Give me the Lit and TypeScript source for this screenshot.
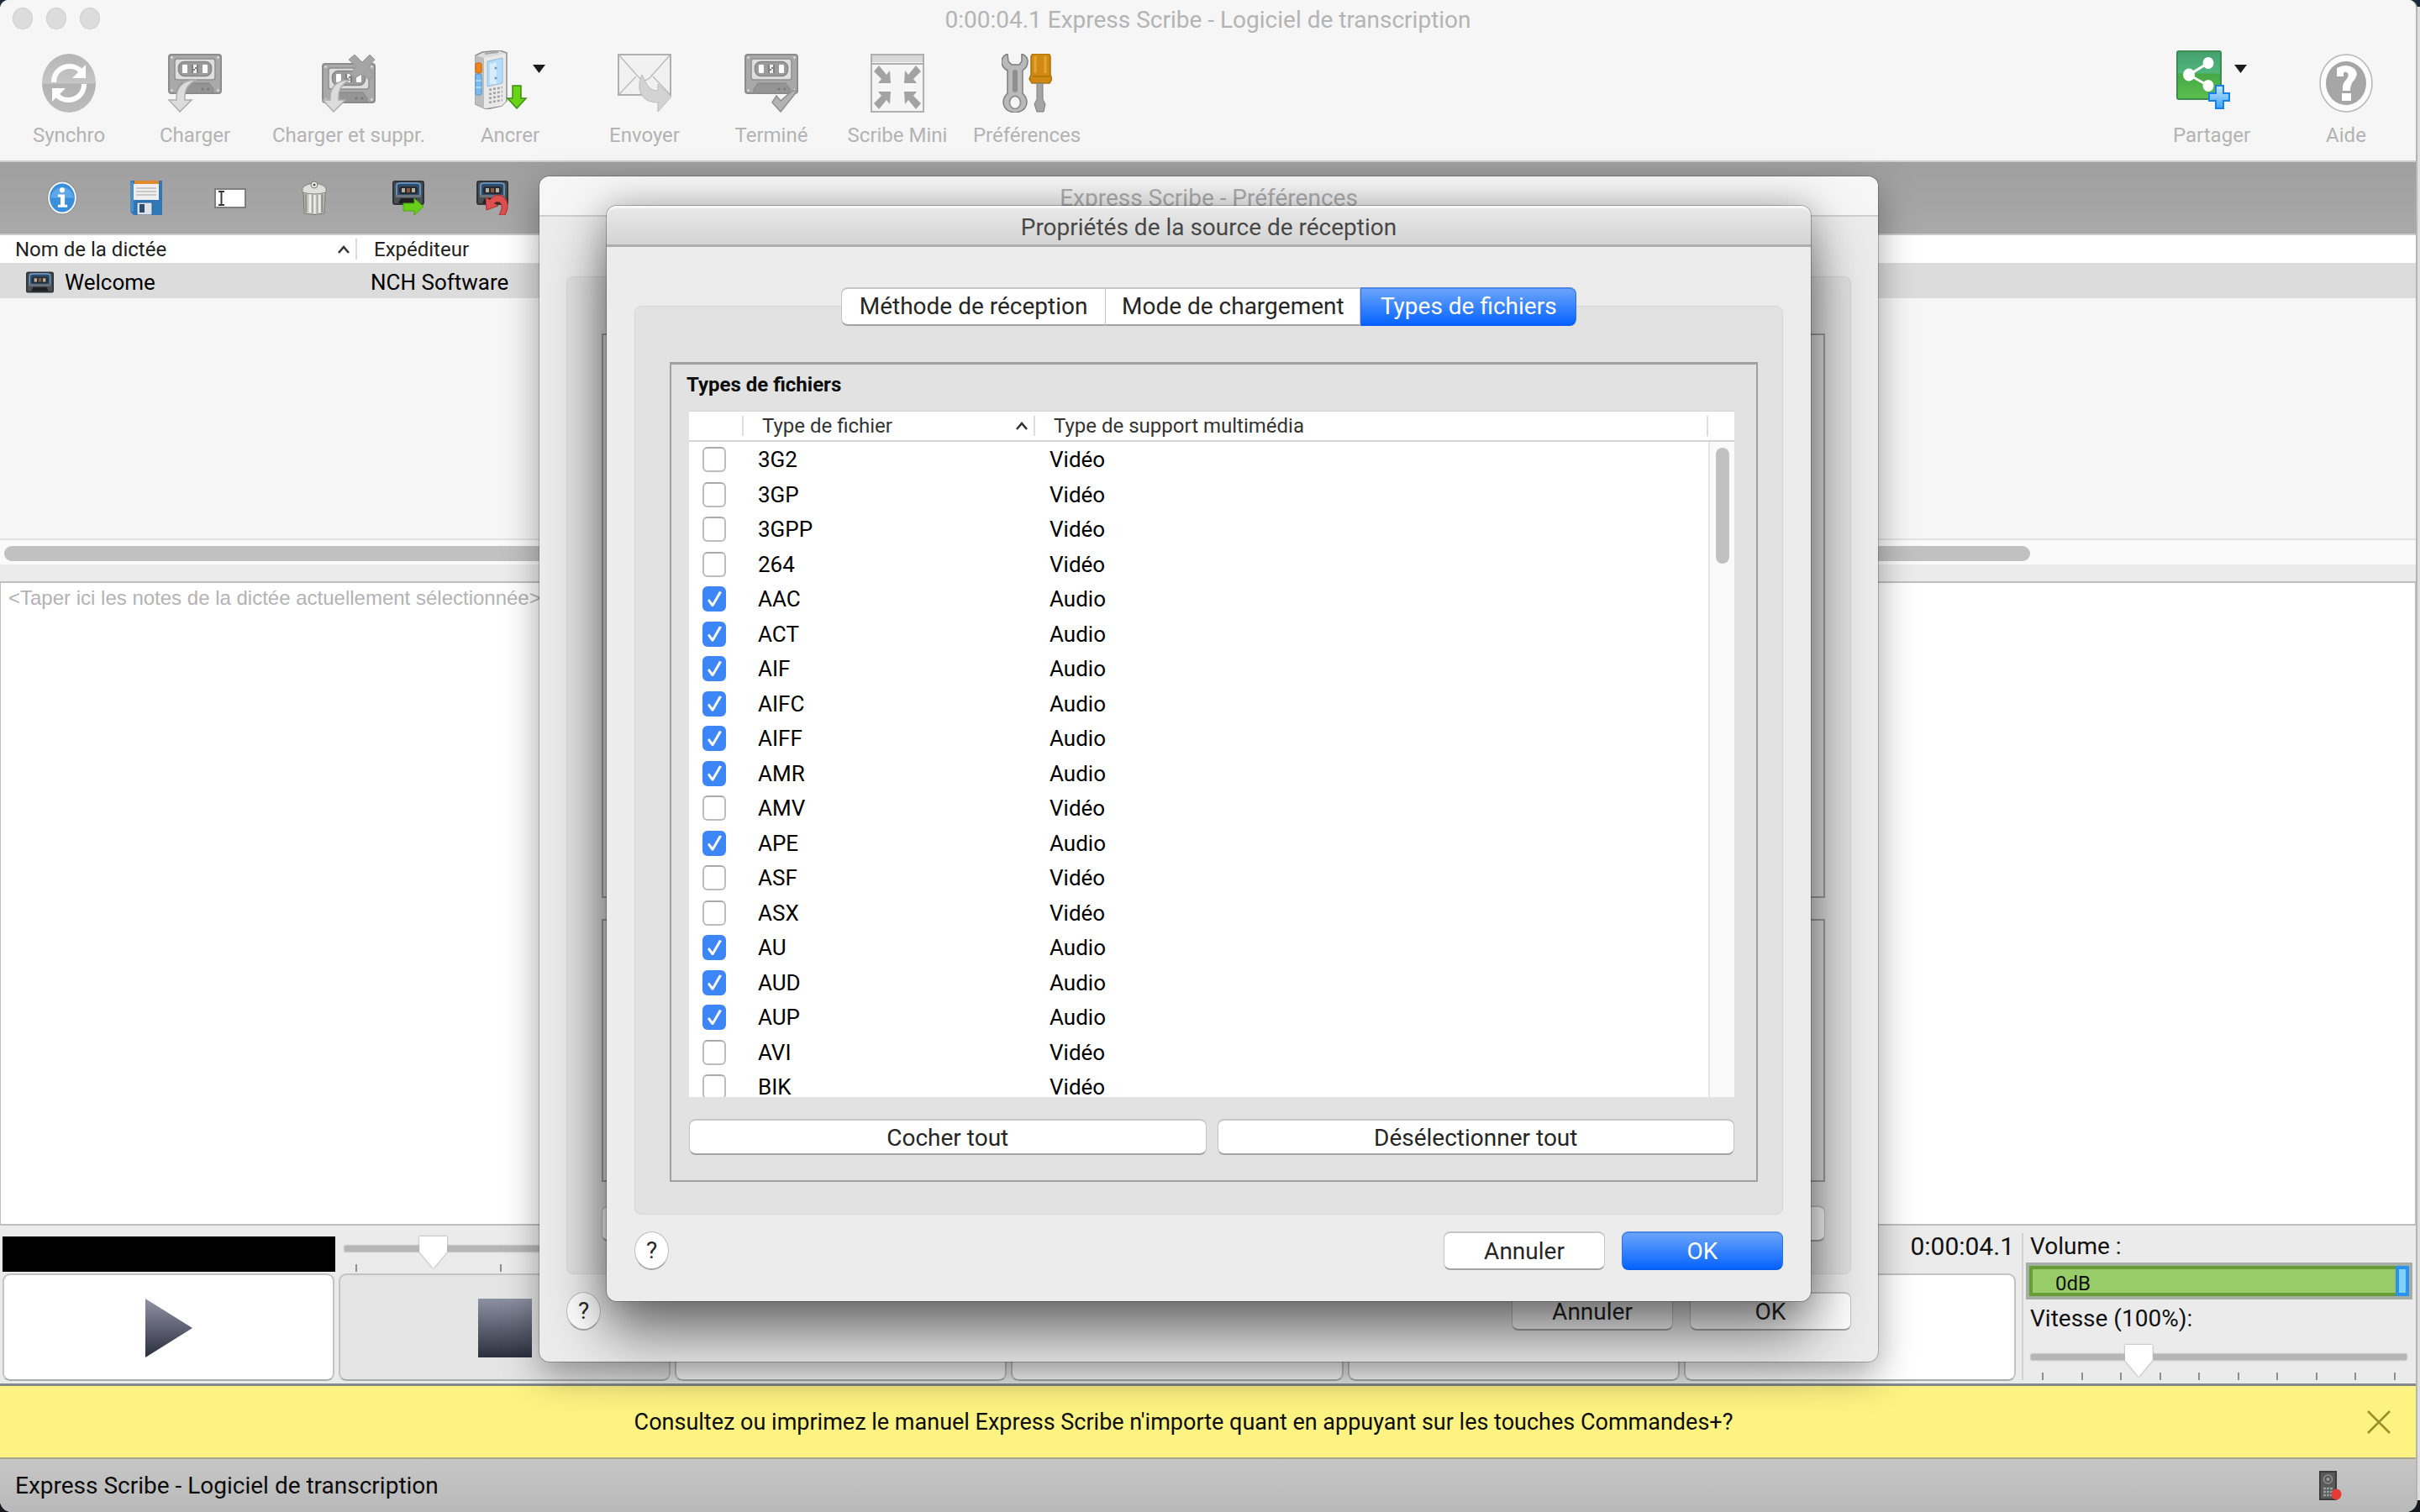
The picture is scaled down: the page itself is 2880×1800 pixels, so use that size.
import { LitElement, html, css, svg, nothing } from "lit";
import { customElement } from "lit/decorators.js";
import { classMap } from "lit/directives/class-map.js";

type FileType = [name: string, media: string, checked: boolean];

const FILE_TYPES: FileType[] = [
  ["3G2", "Vidéo", false],
  ["3GP", "Vidéo", false],
  ["3GPP", "Vidéo", false],
  ["264", "Vidéo", false],
  ["AAC", "Audio", true],
  ["ACT", "Audio", true],
  ["AIF", "Audio", true],
  ["AIFC", "Audio", true],
  ["AIFF", "Audio", true],
  ["AMR", "Audio", true],
  ["AMV", "Vidéo", false],
  ["APE", "Audio", true],
  ["ASF", "Vidéo", false],
  ["ASX", "Vidéo", false],
  ["AU", "Audio", true],
  ["AUD", "Audio", true],
  ["AUP", "Audio", true],
  ["AVI", "Vidéo", false],
  ["BIK", "Vidéo", false],
];

/* Cassette in greys, 64 x 48, used by the disabled toolbar buttons */
const greyCassette = svg`
  <rect x="1" y="1" width="62" height="46" rx="3" fill="#a9a9a9" stroke="#8c8c8c" stroke-width="2"/>
  <rect x="8" y="6" width="48" height="25" rx="3" fill="#dedede" stroke="#8f8f8f" stroke-width="1.5"/>
  <rect x="12.500" y="9.500" width="39" height="17" rx="7" fill="#9b9b9b" stroke="#868686" stroke-width="1.500"/>
  <rect x="17" y="13" width="6" height="10" rx="1" fill="#fff"/>
  <rect x="28" y="13" width="8" height="10" fill="#808080"/>
  <path d="M30 13h4v3h-2v2h2v5h-4v-3h2v-2h-2z" fill="#efefef"/>
  <rect x="41" y="13" width="6" height="10" rx="1" fill="#fff"/>
  <path d="M11 47v-5l5-7h33l5 7v5z" fill="#959595" stroke="#858585"/>
  <circle cx="41" cy="42" r="1.500" fill="#777"/><circle cx="48" cy="42" r="1.500" fill="#777"/>
  <circle cx="4.500" cy="4.500" r="1.200" fill="#e8e8e8"/><circle cx="59.500" cy="4.500" r="1.200" fill="#e8e8e8"/>
  <circle cx="4.500" cy="43.500" r="1.200" fill="#e8e8e8"/><circle cx="59.500" cy="43.500" r="1.200" fill="#e8e8e8"/>`;

const curvedArrow = svg`
  <path d="M34 31C24 31 10 35 10 52V55H1L14 69 28 55H20V51C20 42 25 35 34 31Z" fill="#dcdcdc" stroke="#adadad" stroke-width="1.500"/>`;

const darkCassette = svg`
  <rect x="1" y="1" width="36" height="27" rx="2" fill="#4a4f54" stroke="#303336" stroke-width="2"/>
  <path d="M5 17V6Q5 3 9 3H29Q33 3 33 6V17" fill="#2f4b67" stroke="#6fa5d8" stroke-width="1.500"/>
  <rect x="8" y="7" width="22" height="9" rx="3" fill="#272c31"/>
  <rect x="11" y="9" width="4" height="5" fill="#b3aca4"/><rect x="17" y="9" width="4" height="5" fill="#8a5a3a"/><rect x="23" y="9" width="4" height="5" fill="#b3aca4"/>
  <rect x="4" y="17" width="30" height="3" fill="#6a7580"/>
  <path d="M7 27l3-6h18l3 6z" fill="#1f2123"/>`;

const ICONS = {
  sync: svg`<svg viewBox="0 0 64 70" class="big">
    <defs><linearGradient id="sy" x1="0" y1="0" x2="0" y2="1"><stop offset="0" stop-color="#b5b5b5"/><stop offset=".5" stop-color="#c6c6c6"/><stop offset=".52" stop-color="#b2b2b2"/><stop offset="1" stop-color="#bdbdbd"/></linearGradient></defs>
    <ellipse cx="32" cy="35" rx="32" ry="35" fill="url(#sy)"/>
    <path d="M14 34C14 21 24 15 33 15 39 15 44 18 46 21" fill="none" stroke="#fff" stroke-width="6"/>
    <path d="M52 13V29H36Z" fill="#fff"/>
    <path d="M50 36C50 49 40 55 31 55 25 55 20 52 18 49" fill="none" stroke="#fff" stroke-width="6"/>
    <path d="M12 57V41H28Z" fill="#fff"/></svg>`,
  load: svg`<svg viewBox="0 0 64 70" class="big">${greyCassette}${curvedArrow}</svg>`,
  loadDelete: svg`<svg viewBox="0 0 64 70" class="big">
    <g transform="translate(0 11)">${greyCassette}</g>
    <path d="M32 7L39 1 48 10 57 1 63 7 55 16 63 26 56 31 48 24 39 29 33 24 41 15Z" fill="#a5a5a5" stroke="#979797"/>
    ${curvedArrow}</svg>`,
  dock: svg`<svg viewBox="0 0 64 70" class="big">
    <path d="M1 6L9 2 30 0 38 3V60L32 66 14 70 1 64Z" fill="#dcdcdc" stroke="#8e8e8e" stroke-width="1.500"/>
    <path d="M1 6L11 9V69L1 64Z" fill="#bdbdbd"/><path d="M11 9L37 4V61L32 66 11 69Z" fill="#e9e9e9"/>
    <path d="M12 4L28 2" stroke="#a6a6a6" stroke-width="2"/>
    <rect x="1" y="15" width="7" height="12" rx="2" fill="#f08418" stroke="#c7660a"/>
    <rect x="1" y="28" width="7" height="25" rx="2" fill="#79bcf4" stroke="#5294cf"/><path d="M1 36h7M1 44h7" stroke="#d9eefc"/>
    <path d="M15 13L33 9V39L15 43Z" fill="#b5dcfa" stroke="#9db8cc"/><path d="M18 16L26 14V40L18 40Z" fill="#d7ecfc"/>
    <circle cx="25" cy="21" r="1.500" fill="#7f95ad"/><circle cx="25" cy="33" r="1.500" fill="#7f95ad"/>
    <path d="M17 47l16-3M17 52l16-3M17 57l16-3M17 62l16-3" stroke="#a2a2a2" stroke-width="2.500" stroke-dasharray="3 2"/>
    <path d="M45 42H55V57H61L50 69 39 57H45Z" fill="#67d416" stroke="#3b8f10" stroke-width="1.500"/></svg>`,
  send: svg`<svg viewBox="0 0 64 70" class="big">
    <rect x="1" y="1" width="62" height="48" fill="#f1f1f1" stroke="#b0b0b0" stroke-width="2"/>
    <path d="M2 2L26 29Q32 34 38 29L62 2M2 48L22 27M62 48L42 27" fill="none" stroke="#bdbdbd" stroke-width="1.500"/>
    <path d="M29 25C22 40 26 58 48 58V69L64 51 48 36V44C38 44 35 38 29 25Z" fill="#d3d3d3" stroke="#bababa"/></svg>`,
  done: svg`<svg viewBox="0 0 64 70" class="big">${greyCassette}
    <path d="M33 58L38 50 43 56 57 44H63L43 69Z" fill="#b3b3b3" stroke="#8e8e8e" stroke-width="1.500"/></svg>`,
  mini: svg`<svg viewBox="0 0 64 70" class="big">
    <rect x="1" y="1" width="62" height="68" fill="#f5f5f5" stroke="#b0b0b0" stroke-width="2"/>
    <rect x="2" y="2" width="60" height="8" fill="#d8d8d8"/><path d="M1 12H63" stroke="#b0b0b0" stroke-width="2"/>
    ${[[1, 1], [-1, 1], [1, -1], [-1, -1]].map(
      ([x, y]) => svg`<path transform="translate(32 40) scale(${x} ${y})" d="M-8 -5L-23 -5 -19 -10 -28 -19 -22 -26 -13 -15 -9 -20Z" fill="#a3a3a3"/>`,
    )}</svg>`,
  prefs: svg`<svg viewBox="0 0 60 70" class="big narrow">
    <path d="M7 0Q0 3 0 9 0 16 7 20V47Q2 52 2 58 3 69 16 70 29 69 30 58 30 52 25 47V20Q31 16 31 9 31 3 24 0V9L21 13H12L8 9Z" fill="#b9b9b9" stroke="#7d7d7d" stroke-width="1.500"/>
    <rect x="13" y="19" width="6" height="27" rx="3" fill="#8f8f8f"/>
    <ellipse cx="16" cy="58" rx="6.500" ry="7.500" fill="#f6f6f6" stroke="#888" stroke-width="1.500"/>
    <path d="M35 3Q36 0 39 0H54Q58 0 58 4V25L60 30 57 35H36L33 30 35 25Z" fill="#d08a14" stroke="#ab7309" stroke-width="1.500"/>
    <path d="M40 3V23M52 3V23" stroke="#e2a532" stroke-width="3"/><path d="M37 27H57" stroke="#ab7309" stroke-width="1.500"/>
    <path d="M42 35H49V54L52 60 50 69H42L39 60 42 54Z" fill="#a4a4a4" stroke="#7c7c7c"/></svg>`,
  share: svg`<svg viewBox="0 0 64 70" class="big">
    <defs><linearGradient id="sh" x1="0" y1="0" x2="0" y2="1"><stop offset="0" stop-color="#43a06d"/><stop offset=".45" stop-color="#52b57c"/><stop offset=".48" stop-color="#46a847"/><stop offset="1" stop-color="#5cbf4b"/></linearGradient>
    <linearGradient id="pl" x1="0" y1="0" x2="0" y2="1"><stop offset="0" stop-color="#c6e7ff"/><stop offset="1" stop-color="#3aa4f8"/></linearGradient></defs>
    <rect x="1" y="1" width="52" height="57" rx="2" fill="url(#sh)" stroke="#3b8a50" stroke-width="2"/>
    <path d="M38 15L15 29 38 42" fill="none" stroke="#fff" stroke-width="3"/>
    <ellipse cx="38" cy="15" rx="6.500" ry="7" fill="#fff"/><ellipse cx="15" cy="29" rx="7" ry="7.500" fill="#fff"/><ellipse cx="38" cy="42" rx="6.500" ry="7" fill="#fff"/>
    <path d="M47 42H56V51H63V60H56V69H47V60H39V51H47Z" fill="url(#pl)" stroke="#167ff0" stroke-width="2"/></svg>`,
  help: svg`<svg viewBox="0 0 64 70" class="big">
    <ellipse cx="32" cy="35" rx="31" ry="34" fill="#fcfcfc" stroke="#b5b5b5" stroke-width="1.500"/>
    <ellipse cx="32" cy="35" rx="24" ry="26" fill="#a6a6a6"/>
    <path d="M21 27V17Q32 11 41 17 48 23 42 31 37 36 37 44H28Q27 36 32 31 36 27 34 23 31 20 29 23V27Z" fill="#fff"/>
    <rect x="27" y="47" width="11" height="9" fill="#fff"/></svg>`,
  info: svg`<svg viewBox="0 0 36 40" class="small">
    <ellipse cx="18" cy="20" rx="17" ry="19" fill="#f2f6fa" stroke="#8a8a8a"/>
    <ellipse cx="18" cy="20" rx="14.500" ry="16.500" fill="#3a8fdc"/><path d="M4 20A14.500 16.500 0 0 1 32 20Z" fill="#5fa8e8"/>
    <ellipse cx="18" cy="11" rx="3" ry="3" fill="#fff"/><path d="M13 16H21V28H24V31H13V28H16V19H13Z" fill="#fff"/></svg>`,
  save: svg`<svg viewBox="0 0 38 41" class="small">
    <path d="M0 2Q0 0 2 0H38V41H4L0 37Z" fill="#2f77b5"/><path d="M0 2H4V37H0Z" fill="#4a8fc8"/>
    <rect x="5" y="0" width="29" height="4" fill="#e08a2b"/><rect x="4" y="4" width="30" height="19" fill="#efefef"/>
    <path d="M7 9H31M7 13H31M7 17H31" stroke="#c9c9c9" stroke-width="2"/>
    <path d="M8 26H26V41H8Z" fill="#dfe3e6" stroke="#24629b"/><rect x="11" y="28" width="6" height="10" fill="#2f4f72"/></svg>`,
  rename: svg`<svg viewBox="0 0 38 24" class="small short">
    <rect x="1" y="1" width="36" height="22" fill="#fff" stroke="#7f7f7f" stroke-width="2"/>
    <path d="M5 4H12M5 20H12M8.500 4V20" stroke="#3a3a3a" stroke-width="2" fill="none"/></svg>`,
  trash: svg`<svg viewBox="0 0 30 41" class="small slim">
    <path d="M2 13H28L27 39Q15 42 3 39Z" fill="#cfcfca" stroke="#76766f"/>
    <path d="M5 16V38M24.500 16V38" stroke="#9a9a94" stroke-width="3"/>
    <path d="M13 17V39M18.500 17V39" stroke="#a3a39d" stroke-width="1.500"/>
    <path d="M10 16V38M15.500 17V39M21.500 17V38" stroke="#efefeb" stroke-width="2"/>
    <path d="M1 14V9Q4 4 15 3 26 4 29 9V14Q15 18 1 14Z" fill="#dededa" stroke="#85857e"/>
    <ellipse cx="15" cy="5" rx="4" ry="4" fill="#ecece9" stroke="#77776f"/><circle cx="15" cy="5" r="1.500" fill="#55554f"/></svg>`,
  forward: svg`<svg viewBox="0 0 38 41" class="small">${darkCassette}
    <path d="M13 27H26V21L37 31 26 41V36H13Z" fill="#67cf17" stroke="#4aa512"/></svg>`,
  undo: svg`<svg viewBox="0 0 38 41" class="small">${darkCassette}
    <path d="M12 35L11 20 16 23Q24 13 33 20 41 28 34 41H27Q33 30 28 26 24 24 21 27L26 30Z" fill="#de4f4f" stroke="#a83030"/></svg>`,
  tape: svg`<svg viewBox="0 0 38 29" class="tape">${darkCassette}</svg>`,
  device: svg`<svg viewBox="0 0 27 35" class="device">
    <rect x="1" y="1" width="19" height="33" fill="#5a5a5a" stroke="#3c3c3c" stroke-width="2"/>
    <ellipse cx="10.500" cy="10" rx="5" ry="5" fill="none" stroke="#8f8f8f" stroke-width="1.500"/><circle cx="10.500" cy="10" r="2" fill="#9d9d9d"/>
    <path d="M5 21H16M5 25H16M5 29H16" stroke="#8fa39d" stroke-width="2.500" stroke-dasharray="3 1"/>
    <ellipse cx="20.500" cy="28" rx="6" ry="6.500" fill="#e53935"/></svg>`,
  play: svg`<svg viewBox="0 0 56 70" class="play">
    <defs><linearGradient id="g1" x1="0" y1="0" x2="0" y2="1"><stop offset="0" stop-color="#9294a6"/><stop offset="1" stop-color="#2a2d3c"/></linearGradient></defs>
    <path d="M0 0L56 35 0 70Z" fill="url(#g1)"/></svg>`,
  stop: svg`<svg viewBox="0 0 64 70" class="big">
    <defs><linearGradient id="g2" x1="0" y1="0" x2="0" y2="1"><stop offset="0" stop-color="#8d90a1"/><stop offset="1" stop-color="#2c303e"/></linearGradient></defs>
    <rect width="64" height="70" fill="url(#g2)"/></svg>`,
  close: svg`<svg viewBox="0 0 28 28" class="close"><path d="M1 1L27 27M27 1L1 27" stroke="#9a8f2b" stroke-width="2.500" fill="none"/></svg>`,
  caret: svg`<svg viewBox="0 0 14 10" class="caret"><path d="M1 9L7 2 13 9" stroke="#333" stroke-width="2.500" fill="none"/></svg>`,
  drop: svg`<svg viewBox="0 0 15 10" class="drop"><path d="M0 0H15L7.500 10Z" fill="#1c1c1c"/></svg>`,
};

const base = css`
  :host {
    font-family: Roboto, "Liberation Sans", sans-serif;
    font-size: 28px;
    line-height: 32px;
  }
  * {
    box-sizing: border-box;
  }
  svg {
    display: block;
    flex: none;
  }
  button {
    font: inherit;
    color: inherit;
    margin: 0;
    padding: 0;
  }
  h1,
  h2,
  p {
    margin: 0;
    font: inherit;
  }
  table {
    border-collapse: separate;
    border-spacing: 0;
    table-layout: fixed;
    width: 100%;
  }
  th,
  td {
    padding: 0;
    text-align: left;
    font-weight: 400;
  }
  .caret {
    width: 14px;
    height: 10px;
  }
  .push {
    padding-top: 2px;
    border: 1px solid #c4c4c4;
    border-top: 2px solid #c6c6c6;
    border-bottom: 2px solid #a3a3a3;
    border-radius: 8px;
    background: #fff;
    color: #262626;
  }
  .sized {
    width: 192px;
    height: 46px;
  }
  .primary {
    border-color: #4a86e8 #2a6fe8 #0a5df0;
    background: linear-gradient(#6aa4fb, #0764ff);
    color: #fff;
  }
  .query {
    width: 41px;
    height: 46px;
    border: 1px solid #bdbdbd;
    border-bottom: 2px solid #a6a6a6;
    border-radius: 50%;
    background: #fff;
    color: #262626;
  }
`;

@customElement("file-types-dialog")
class FileTypesDialog extends LitElement {
  static styles = [
    base,
    css`
      :host {
        display: block;
        width: 1433px;
        border-radius: 12px;
        background: #ececec;
        box-shadow: 0 0 0 1px rgba(0, 0, 0, 0.25), 0 40px 70px rgba(0, 0, 0, 0.5), 0 0 44px rgba(0, 0, 0, 0.25);
      }
      .title {
        display: flex;
        align-items: center;
        justify-content: center;
        height: 49px;
        padding-top: 2px;
        border-top: 3px solid #f7f7f7;
        border-bottom: 3px solid #adadad;
        border-radius: 12px 12px 0 0;
        background: linear-gradient(#e9e9e9, #d3d3d3);
        color: #484848;
      }
      .body {
        padding: 48px 33px 37px;
      }
      .tabs {
        position: relative;
        display: flex;
        width: 875px;
        height: 46px;
        margin: 0 auto -24px;
      }
      .tab {
        flex: 315 0 0;
        border: solid #c6c6c6;
        border-width: 2px 1px;
        border-bottom-color: #a3a3a3;
        background: #fff;
        color: #262626;
      }
      .tab:first-child {
        border-radius: 8px 0 0 8px;
      }
      .tab.middle {
        flex-grow: 304;
        border-left: 0;
      }
      .tab.on {
        flex-grow: 256;
        border-color: #4a86e8 #2a6fe8 #0a5df0;
        border-radius: 0 8px 8px 0;
        background: linear-gradient(#6aa4fb, #0764ff);
        color: #fff;
      }
      .panel {
        padding: 66px 29px 38px 41px;
        border: 1px solid #d6d6d6;
        border-radius: 8px;
        background: #e2e2e2;
      }
      .box {
        padding: 10px 26px 30px 18px;
        border: 2px solid #a0a0a0;
        border-top-width: 3px;
      }
      .heading {
        margin-bottom: 17px;
        font-size: 24px;
        font-weight: 700;
        line-height: 28px;
        color: #0c0c0c;
      }
      .content {
        padding-left: 3px;
      }
      .list {
        display: grid;
        grid-template-columns: 1fr 31px;
        height: 817px;
        overflow: hidden;
        border-top: 1px solid #d2d2d2;
        background: #fff;
      }
      .tick {
        width: 65px;
      }
      .kind {
        width: 347px;
      }
      th {
        height: 36px;
        border-bottom: 2px solid #d4d4d4;
        font-size: 24px;
        line-height: 28px;
        color: #333;
      }
      .label {
        display: flex;
        align-items: center;
        justify-content: space-between;
        height: 24px;
        padding: 0 7px 0 22px;
        border-right: 2px solid #dedede;
      }
      td {
        height: 42px;
        padding-left: 17px;
        font-size: 26px;
        line-height: 24px;
        color: #000;
      }
      tr:nth-child(even) td {
        height: 41px;
      }
      td:first-child {
        padding-left: 16px;
      }
      .check {
        position: relative;
        display: block;
        width: 28px;
        height: 30px;
        margin: 0;
        appearance: none;
        border: 2px solid #bcbcbc;
        border-top-color: #aaa;
        border-radius: 6px;
        background: #fff;
      }
      .check:checked {
        border-color: #3d86f8;
        background: #3d86f8;
      }
      .check:checked::after {
        content: "";
        position: absolute;
        inset: -2px;
        background: #fff;
        clip-path: polygon(6px 17px, 8px 15px, 12px 20px, 20px 6px, 23px 7px, 13px 24px, 11px 24px);
      }
      .side {
        display: flex;
        flex-direction: column;
      }
      .cap {
        height: 36px;
        border-bottom: 2px solid #d4d4d4;
      }
      .track {
        flex: 1;
        padding: 7px;
        border-left: 2px solid #e6e6e6;
        background: #fafafa;
      }
      .thumb {
        width: 16px;
        height: 138px;
        border-radius: 8px;
        background: #c1c1c1;
      }
      .pair {
        display: grid;
        grid-template-columns: 1fr 1fr;
        gap: 13px;
        margin-top: 26px;
      }
      .pair .push {
        height: 43px;
      }
      .footer {
        display: flex;
        gap: 20px;
        margin-top: 20px;
      }
      .query {
        margin-right: auto;
      }
    `,
  ];

  render() {
    return html`
      <h1 class="title">Propriétés de la source de réception</h1>
      <div class="body">
        <div class="tabs" role="tablist">
          <button class="tab" role="tab">Méthode de réception</button>
          <button class="tab middle" role="tab">Mode de chargement</button>
          <button class="tab on" role="tab" aria-selected="true">Types de fichiers</button>
        </div>
        <div class="panel">
          <section class="box">
            <h2 class="heading">Types de fichiers</h2>
            <div class="content">
              <div class="list">
                <table>
                  <thead>
                    <tr>
                      <th class="tick"><div class="label"></div></th>
                      <th class="kind"><div class="label">Type de fichier ${ICONS.caret}</div></th>
                      <th><div class="label">Type de support multimédia</div></th>
                    </tr>
                  </thead>
                  <tbody>
                    ${FILE_TYPES.map(
                      ([name, media, checked]) => html`<tr>
                        <td><input class="check" type="checkbox" id="t-${name}" .checked=${checked} /></td>
                        <td><label for="t-${name}">${name}</label></td>
                        <td>${media}</td>
                      </tr>`,
                    )}
                  </tbody>
                </table>
                <div class="side">
                  <div class="cap"></div>
                  <div class="track"><div class="thumb"></div></div>
                </div>
              </div>
              <div class="pair">
                <button class="push">Cocher tout</button>
                <button class="push">Désélectionner tout</button>
              </div>
            </div>
          </section>
        </div>
        <div class="footer">
          <button class="query">?</button>
          <button class="push sized">Annuler</button>
          <button class="push sized primary">OK</button>
        </div>
      </div>
    `;
  }
}

@customElement("preferences-dialog")
class PreferencesDialog extends LitElement {
  static styles = [
    base,
    css`
      :host {
        display: flex;
        flex-direction: column;
        width: 1593px;
        height: 1411px;
        border-radius: 12px;
        background: #ececec;
        box-shadow: 0 0 0 1px rgba(0, 0, 0, 0.22), 0 16px 44px rgba(0, 0, 0, 0.36);
      }
      .title {
        height: 48px;
        padding-top: 10px;
        border-bottom: 2px solid #cfcfcf;
        border-radius: 12px 12px 0 0;
        background: #f6f6f6;
        color: #b0b0b0;
        text-align: center;
      }
      .body {
        flex: 1;
        display: flex;
        flex-direction: column;
        padding: 71px 32px 37px;
      }
      .panel {
        flex: 1;
        display: flex;
        flex-direction: column;
        gap: 25px;
        padding: 67px 30px 38px 41px;
        border: 1px solid #d6d6d6;
        border-radius: 8px;
        background: #e2e2e2;
      }
      .box {
        flex: 676 0 0;
        border: 2px solid #a0a0a0;
      }
      .box.lower {
        flex-grow: 312;
      }
      .panel .push {
        height: 43px;
        margin-top: 3px;
      }
      .footer {
        display: flex;
        gap: 20px;
        margin-top: 21px;
      }
      .query {
        margin-right: auto;
      }
    `,
  ];

  render() {
    return html`
      <h1 class="title">Express Scribe - Préférences</h1>
      <div class="body">
        <div class="panel">
          <div class="box"></div>
          <div class="box lower"></div>
          <button class="push"></button>
        </div>
        <div class="footer">
          <button class="query">?</button>
          <button class="push sized">Annuler</button>
          <button class="push sized">OK</button>
        </div>
      </div>
    `;
  }
}

@customElement("app-root")
class AppRoot extends LitElement {
  static styles = [
    base,
    css`
      :host {
        position: relative;
        display: flex;
        min-height: 100vh;
        overflow: hidden;
        background: linear-gradient(#1b2a3a 0 8px, #dedede 8px calc(100% - 14px), #15181c 0);
      }
      .window {
        flex: 1;
        display: flex;
        flex-direction: column;
        min-width: 0;
        margin-right: 3px;
        border-right: 2px solid #b5b5b5;
        border-radius: 10px 10px 14px 14px;
        background: #ebebeb;
        overflow: hidden;
      }
      .titlebar {
        position: relative;
        height: 48px;
        padding-top: 8px;
        background: #f6f6f6;
        color: #b4b4b4;
        text-align: center;
      }
      .lights {
        position: absolute;
        left: 15px;
        top: 9px;
        display: flex;
        gap: 16px;
      }
      .light {
        width: 24px;
        height: 26px;
        border: 1px solid #cecece;
        border-radius: 50%;
        background: #dcdcdc;
      }
      .toolbar {
        display: grid;
        grid-template-columns: 150px 150px 216px 168px 152px 150px 150px 158px 1fr 162px 158px;
        height: 145px;
        padding: 0 4px 0 7px;
        border-bottom: 2px solid #cdcdcd;
        background: #f6f6f6;
        color: #b3b3b3;
        font-size: 24px;
        line-height: 28px;
      }
      .tool {
        display: flex;
        flex-direction: column;
        align-items: center;
        justify-content: flex-end;
        padding-bottom: 16px;
        border: 0;
        background: none;
        white-space: nowrap;
      }
      .share {
        grid-column: 10;
      }
      .art {
        display: flex;
        gap: 5px;
        height: 70px;
        margin-bottom: 13px;
      }
      .menu .art {
        margin-bottom: 17px;
      }
      .big {
        width: 64px;
        height: 70px;
      }
      .narrow {
        width: 60px;
      }
      .drop {
        width: 15px;
        height: 10px;
        margin-top: 17px;
      }
      .actions {
        display: grid;
        grid-template-columns: 100px 100px 100px 100px 124px 76px;
        align-items: center;
        height: 87px;
        padding-left: 24px;
        border-bottom: 2px solid #c9c9c9;
        background: linear-gradient(#9f9f9f, #a9a9a9);
      }
      .action {
        display: flex;
        justify-content: center;
        border: 0;
        background: none;
      }
      .small {
        width: 38px;
        height: 41px;
      }
      .short {
        height: 24px;
      }
      .slim {
        width: 30px;
      }
      .dictations {
        height: 361px;
        background: #f6f6f6;
      }
      th {
        height: 33px;
        background: #fff;
        font-size: 24px;
        line-height: 28px;
        color: #222;
      }
      .name {
        width: 425px;
      }
      .label {
        display: flex;
        align-items: center;
        justify-content: space-between;
        height: 25px;
        padding: 0 7px 0 18px;
      }
      th + th .label {
        padding-left: 20px;
      }
      .name .label {
        border-right: 2px solid #dcdcdc;
      }
      .dictations td {
        height: 42px;
        padding-top: 3px;
        background: #dcdcdc;
        font-size: 26px;
        color: #000;
      }
      .cell {
        display: flex;
        align-items: center;
        gap: 13px;
        padding-left: 31px;
      }
      .cell.sender {
        padding-left: 16px;
      }
      .tape {
        width: 33px;
        height: 26px;
      }
      .hscroll {
        height: 31px;
        padding: 7px 0 7px 5px;
        border-top: 2px solid #e2e2e2;
        background: #fafafa;
      }
      .hthumb {
        width: 84%;
        height: 18px;
        border-radius: 9px;
        background: #c1c1c1;
      }
      .notes {
        flex: 1;
        display: block;
        width: 100%;
        margin: 20px 0 0;
        padding: 3px 9px;
        border: 1px solid #bfbfbf;
        border-top: 2px solid #bfbfbf;
        border-bottom: 2px solid #bfbfbf;
        border-radius: 0;
        background: #fff;
        font: 24px/30px "Liberation Sans", Arial, sans-serif;
        resize: none;
      }
      .notes::placeholder {
        color: #b3b3b3;
      }
      .deck {
        display: flex;
        height: 188px;
      }
      .transport {
        flex: 1;
        display: flex;
        flex-direction: column;
        padding: 9px 7px 3px 3px;
      }
      .progress {
        display: flex;
        align-items: flex-start;
        height: 48px;
      }
      .screen {
        width: 396px;
        height: 42px;
        margin: 4px 11px 0 0;
        background: #000;
      }
      .seek {
        width: 1748px;
        margin: 4px auto 0 0;
      }
      .slide {
        display: block;
        width: 100%;
        height: 38px;
        margin: 0;
        appearance: none;
        background: linear-gradient(#b6b6b6, #b6b6b6) 0 11px / 100% 7px no-repeat;
        filter: drop-shadow(0 0 1px #8e8e8e);
      }
      .slide::-webkit-slider-thumb {
        appearance: none;
        width: 33px;
        height: 38px;
        border: 0;
        background: #fff;
        clip-path: polygon(0 0, 100% 0, 100% 48%, 50% 100%, 0 48%);
      }
      .ticks {
        display: flex;
        justify-content: space-between;
        height: 9px;
        margin: -5px 13px 0;
      }
      .mark {
        width: 2px;
        background: #8f8f8f;
      }
      .time {
        padding-right: 2px;
        color: #111;
        font-size: 30px;
      }
      .keys {
        flex: 1;
        display: grid;
        grid-template-columns: repeat(6, 1fr);
        gap: 5px;
      }
      .key {
        display: flex;
        align-items: center;
        justify-content: center;
        padding-top: 2px;
        border: 2px solid #c3c3c3;
        border-bottom-color: #ababab;
        border-radius: 9px;
        background: #fff;
      }
      .key.off {
        background: #e4e4e4;
      }
      .play {
        width: 56px;
        height: 70px;
      }
      .mixer {
        width: 469px;
        margin: 9px 0 4px;
        padding: 0 4px 0 3px;
        border-left: 2px solid #d2d2d2;
        color: #111;
      }
      .caption {
        display: block;
        height: 35px;
        padding: 0 5px;
      }
      .caption.speed {
        height: 54px;
        padding-top: 7px;
      }
      .gain {
        position: relative;
      }
      .bar {
        display: block;
        width: 100%;
        height: 44px;
        margin: 0;
        appearance: none;
        border: 4px solid #a5aea3;
        background: #98cc69;
        box-shadow: inset 0 0 0 4px #669d37;
      }
      .bar::-webkit-slider-thumb {
        appearance: none;
        width: 16px;
        height: 36px;
        border: 4px solid #2b93ef;
        background: #7fd4ff;
      }
      .level {
        position: absolute;
        left: 35px;
        top: 11px;
        font-size: 24px;
        line-height: 28px;
      }
      .rate {
        margin: 0 7px 0 6px;
      }
      .hint {
        display: flex;
        align-items: center;
        height: 90px;
        padding-right: 30px;
        border-top: 3px solid #858a8c;
        border-bottom: 2px solid #a8a58c;
        background: #fdf382;
        color: #0c0c0c;
      }
      .message {
        flex: 1;
        font-size: 27px;
        text-align: center;
      }
      .dismiss {
        border: 0;
        background: none;
      }
      .close {
        width: 28px;
        height: 28px;
      }
      .status {
        display: flex;
        align-items: center;
        justify-content: space-between;
        height: 63px;
        padding: 0 88px 0 18px;
        background: linear-gradient(#c6c6c6, #b9b9b9);
        color: #0c0c0c;
      }
      .device {
        width: 27px;
        height: 35px;
      }
      .overlay {
        position: absolute;
        inset: 0 3px 0 0;
        display: grid;
        justify-items: center;
        align-items: start;
      }
      .overlay > * {
        grid-area: 1 / 1;
      }
      .back {
        margin-top: 210px;
      }
      .front {
        margin-top: 245px;
      }
    `,
  ];

  private tool(icon: unknown, text: string, menu = false, cls = "") {
    return html`<button class="tool ${cls} ${menu ? "menu" : ""}">
      <span class="art">${icon}${menu ? ICONS.drop : nothing}</span>
      <span>${text}</span>
    </button>`;
  }

  private ticks(count: number) {
    return html`<div class="ticks">${Array.from({ length: count }, () => html`<span class="mark"></span>`)}</div>`;
  }

  render() {
    const actions = ["info", "save", "rename", "trash", "forward", "undo"] as const;
    const keys = [ICONS.play, ICONS.stop, nothing, nothing, nothing, nothing];

    return html`
      <main class="window">
        <header class="titlebar">
          <div class="lights"><span class="light"></span><span class="light"></span><span class="light"></span></div>
          <h1>0:00:04.1 Express Scribe - Logiciel de transcription</h1>
        </header>
        <nav class="toolbar">
          ${this.tool(ICONS.sync, "Synchro")} ${this.tool(ICONS.load, "Charger")}
          ${this.tool(ICONS.loadDelete, "Charger et suppr.")} ${this.tool(ICONS.dock, "Ancrer", true)}
          ${this.tool(ICONS.send, "Envoyer")} ${this.tool(ICONS.done, "Terminé")}
          ${this.tool(ICONS.mini, "Scribe Mini")} ${this.tool(ICONS.prefs, "Préférences")}
          ${this.tool(ICONS.share, "Partager", true, "share")} ${this.tool(ICONS.help, "Aide")}
        </nav>
        <div class="actions">
          ${actions.map((icon) => html`<button class="action">${ICONS[icon]}</button>`)}
        </div>
        <section class="dictations">
          <table>
            <thead>
              <tr>
                <th class="name"><div class="label">Nom de la dictée ${ICONS.caret}</div></th>
                <th><div class="label">Expéditeur</div></th>
              </tr>
            </thead>
            <tbody>
              <tr>
                <td><div class="cell">${ICONS.tape} Welcome</div></td>
                <td><div class="cell sender">NCH Software</div></td>
              </tr>
            </tbody>
          </table>
        </section>
        <div class="hscroll"><div class="hthumb"></div></div>
        <textarea class="notes" placeholder="<Taper ici les notes de la dictée actuellement sélectionnée>"></textarea>
        <section class="deck">
          <div class="transport">
            <div class="progress">
              <div class="screen"></div>
              <div class="seek">
                <input class="slide" type="range" min="0" max="1000" value="52" aria-labelledby="time" />
                ${this.ticks(11)}
              </div>
              <span class="time" id="time">0:00:04.1</span>
            </div>
            <div class="keys">
              ${keys.map(
                (icon, i) => html`<button class=${classMap({ key: true, off: i === 1 })} ?disabled=${i === 1}>${icon}</button>`,
              )}
            </div>
          </div>
          <div class="mixer">
            <label class="caption" for="gain">Volume :</label>
            <div class="gain">
              <input class="bar" id="gain" type="range" min="0" max="100" value="100" />
              <span class="level">0dB</span>
            </div>
            <label class="caption speed" for="rate">Vitesse (100%):</label>
            <div class="rate">
              <input class="slide" id="rate" type="range" min="0" max="100" value="27" />
              ${this.ticks(10)}
            </div>
          </div>
        </section>
        <div class="hint">
          <p class="message">Consultez ou imprimez le manuel Express Scribe n'importe quant en appuyant sur les touches Commandes+?</p>
          <button class="dismiss">${ICONS.close}</button>
        </div>
        <footer class="status"><span>Express Scribe - Logiciel de transcription</span>${ICONS.device}</footer>
      </main>
      <div class="overlay">
        <preferences-dialog class="back"></preferences-dialog>
        <file-types-dialog class="front"></file-types-dialog>
      </div>
    `;
  }
}
